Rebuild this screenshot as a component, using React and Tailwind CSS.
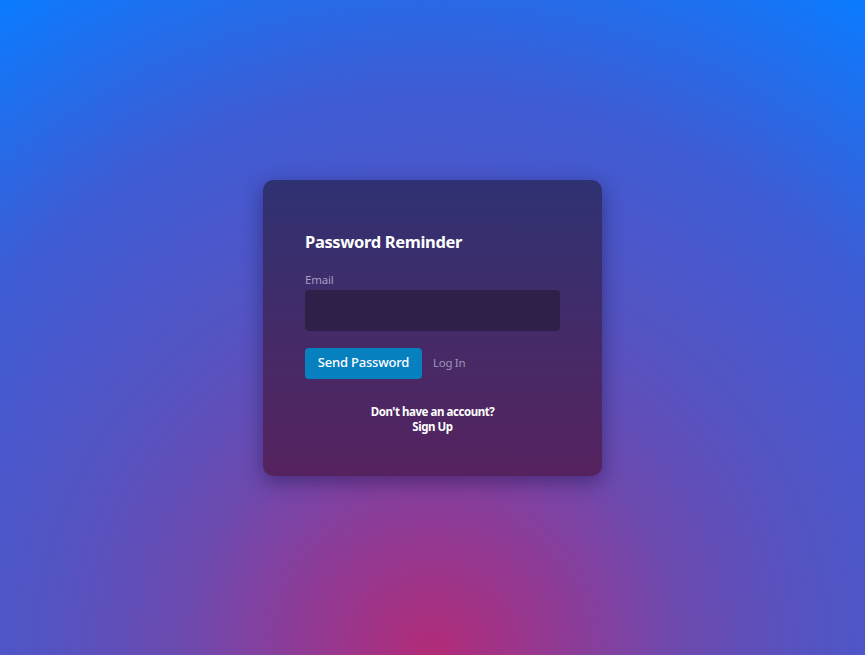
export default function App() {
  return (
    <div
      className="flex min-h-screen items-center justify-center bg-[radial-gradient(circle_farthest-corner_at_50%_100%,#b22b77_0%,#8d3c98_18%,#6c4aaf_32%,#5553c2_48%,#3e5cd4_72%,#0a7cff_100%)]"
      style={{ fontFamily: '"Noto Sans", "Open Sans", sans-serif' }}
    >
      <div className="w-[339px] h-[296px] rounded-[10px] bg-gradient-to-b from-[#2e3172] to-[#55225f] px-[42px] pt-[51px] shadow-[0_6px_20px_rgba(20,10,60,0.45)]">
        <h1 className="text-[16.5px] font-bold leading-[22px] tracking-[-0.35px] text-white">Password Reminder</h1>

        <label className="mt-[19px] block text-[11.5px] leading-[16px] tracking-[-0.2px] text-[#a49bbf]">Email</label>
        <input
          type="email"
          className="mt-[2px] block h-[41px] w-full rounded-[4px] bg-[#2e2049] px-3 text-sm text-white outline-none"
        />

        <div className="mt-[17px] flex items-center gap-[11px]">
          <button className="h-[31px] w-[117px] rounded-[4px] bg-[#0780c0] text-[13px] font-medium tracking-[-0.2px] text-white">
            Send Password
          </button>
          <a href="#" className="text-[11.5px] tracking-[-0.3px] text-[#9e95b8]">Log In</a>
        </div>

        <div className="mt-[25px] text-center text-[11.5px] font-bold leading-[15px] tracking-[-0.45px] text-white">
          <p>Don't have an account?</p>
          <a href="#" className="block">Sign Up</a>
        </div>
      </div>
    </div>
  );
}
